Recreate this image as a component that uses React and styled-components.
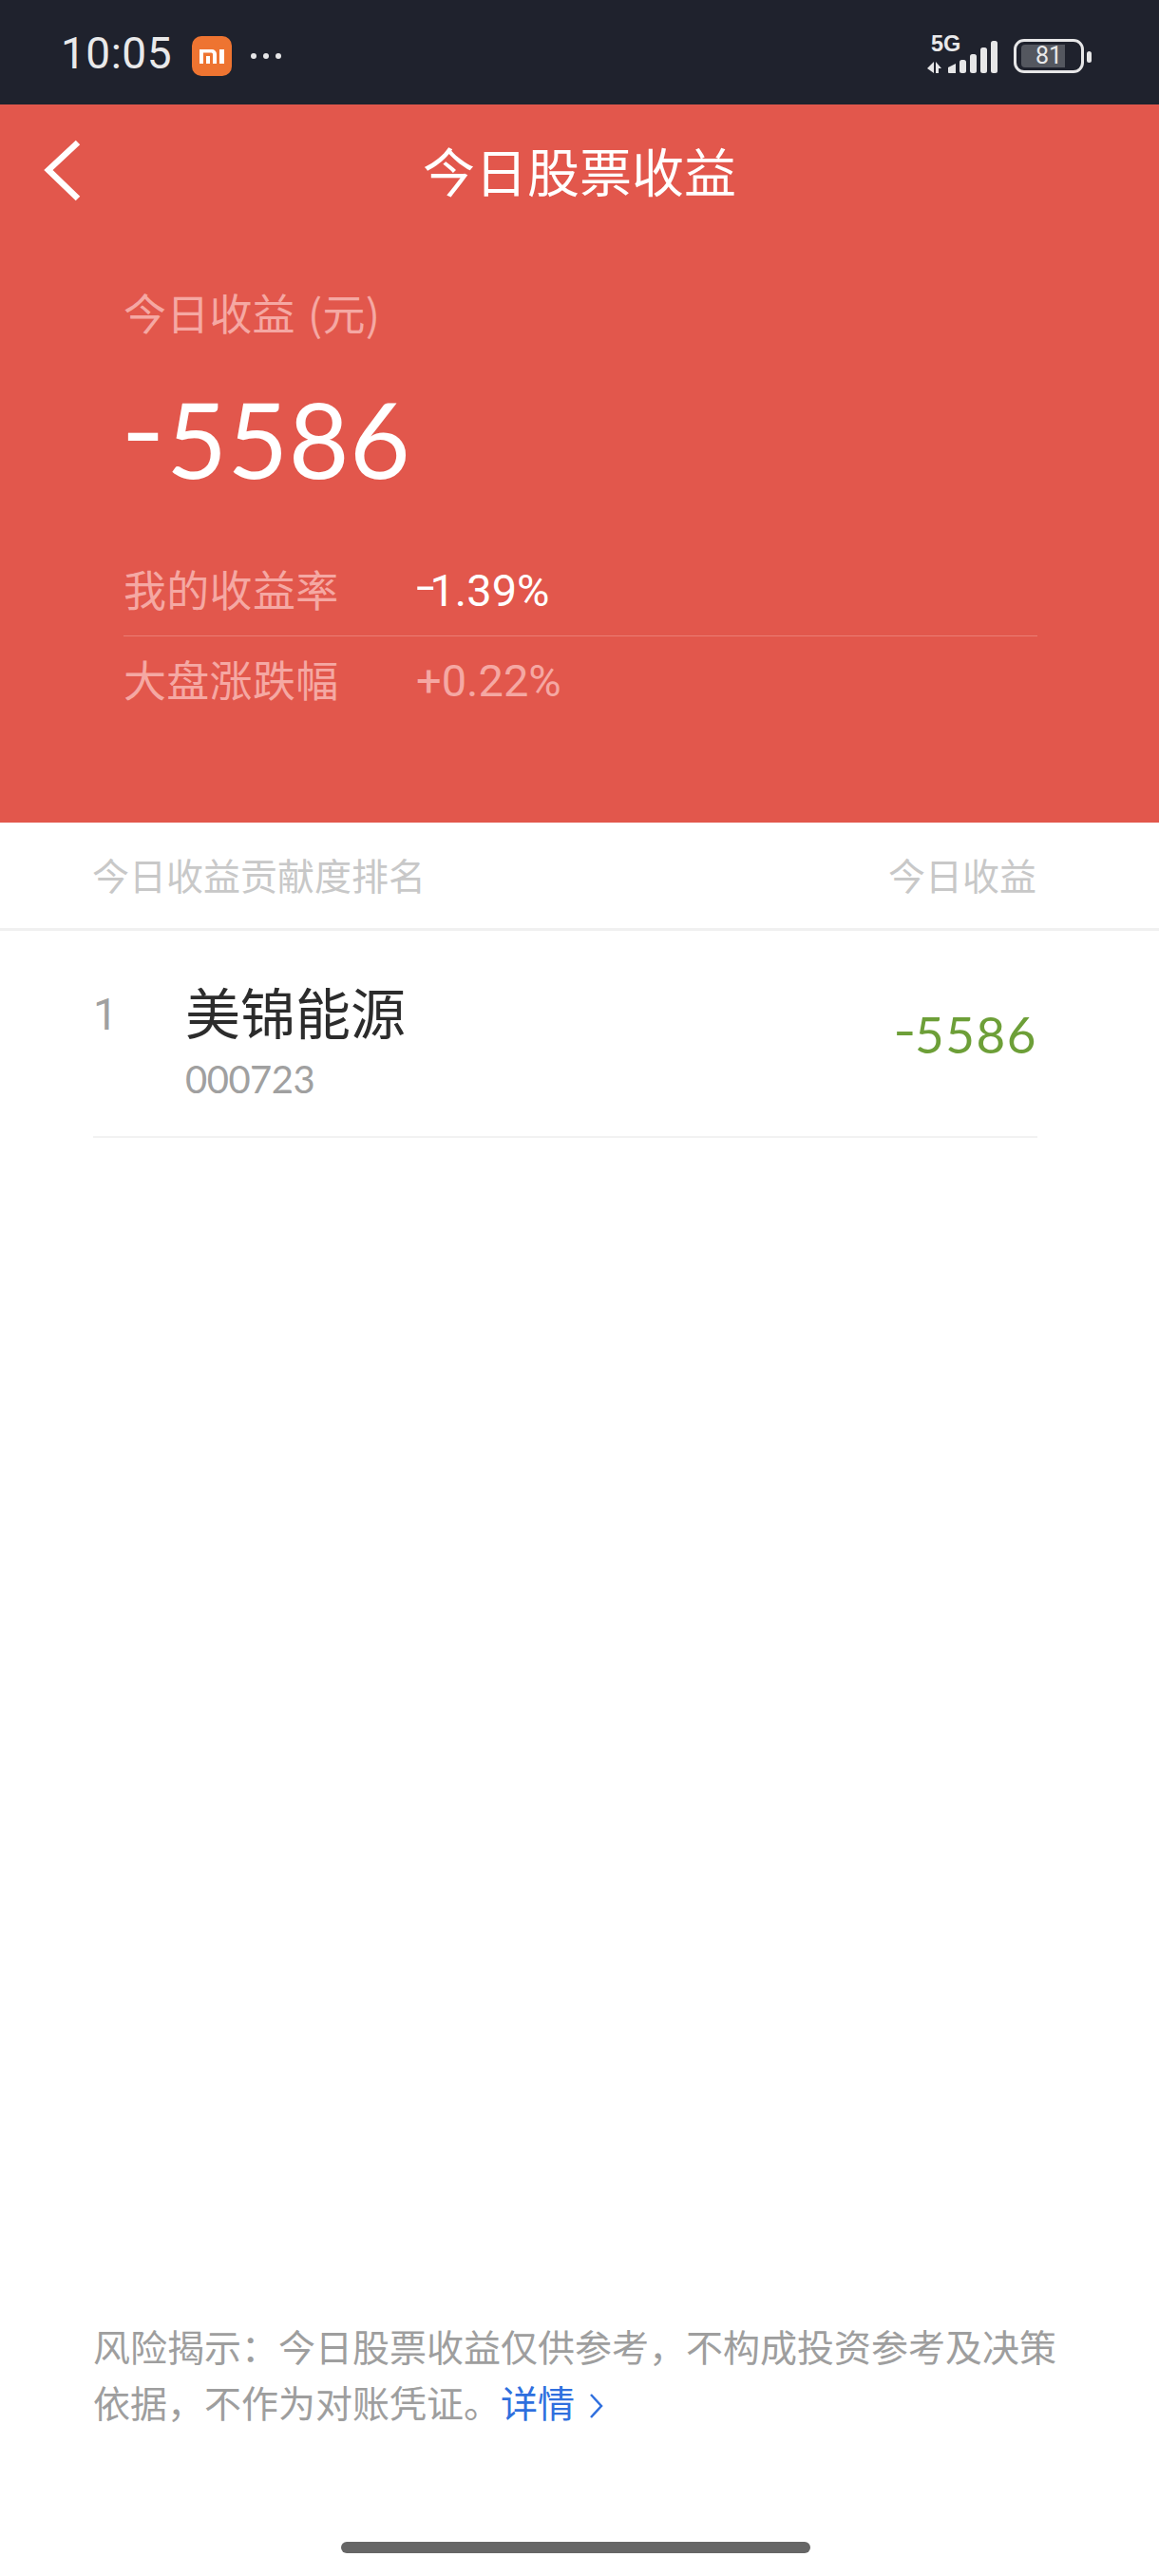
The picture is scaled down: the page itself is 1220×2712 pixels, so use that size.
import React from 'react';
import styled, { createGlobalStyle } from 'styled-components';

const Global = createGlobalStyle`
  html, body { margin: 0; padding: 0; background: #fff; }
  body { font-family: "Lato", "Noto Sans CJK SC", sans-serif; }
`;

const cjk = `"Noto Sans CJK SC", "Noto Sans", sans-serif`;
const num = `"Lato", "Noto Sans CJK SC", sans-serif`;
const slim = `"Roboto", "Noto Sans CJK SC", sans-serif`;

const Page = styled.div`
  width: 1220px;
  height: 2712px;
  display: flex;
  flex-direction: column;
  background: #fff;
  overflow: hidden;
`;

const StatusBar = styled.div`
  height: 110px;
  flex: none;
  background: #1f222d;
  display: flex;
  align-items: center;
  padding: 0 79px 0 64px;
  box-sizing: border-box;
`;
const Time = styled.span`
  font: 400 46px/60px ${slim};
  color: #e9e9ea;
  letter-spacing: 0.5px;
  margin-top: 2px;
`;
const MiBadge = styled.svg`
  display: block;
  margin-left: 21px;
  margin-top: 8px;
`;
const Dots = styled.svg`
  display: block;
  margin-left: 19px;
  margin-top: 8px;
`;
const StatusRight = styled.div`
  margin-left: auto;
  display: flex;
  align-items: center;
`;
const SignalIcon = styled.svg`
  display: block;
  margin-top: 4px;
  overflow: visible;
`;
const FiveG = styled.text`
  font: 700 23.500px "Liberation Sans", sans-serif;
  fill: #e9e9ea;
`;
const Battery = styled.div`
  position: relative;
  width: 74px;
  height: 36px;
  box-sizing: border-box;
  border: 3px solid #e6e6e7;
  border-radius: 11px;
  margin-left: 14px;
  margin-top: 7px;
  display: flex;
  align-items: center;
  padding-left: 5px;
`;
const BatteryFill = styled.div`
  height: 24px;
  background: #54575f;
  border-radius: 4px 0 0 4px;
  display: flex;
  align-items: center;
  justify-content: center;
  padding-left: 12px;
  box-sizing: border-box;
  font: 400 25px/24px ${slim};
  color: #e9e9ea;
`;
const BatteryNub = styled.div`
  position: absolute;
  left: 74px;
  top: 10px;
  width: 5px;
  height: 12px;
  border-radius: 3px;
  background: #e6e6e7;
`;

const Hero = styled.section`
  height: 756px;
  flex: none;
  box-sizing: border-box;
  background: #e2574c;
`;
const NavBar = styled.header`
  height: 140px;
  display: grid;
  grid-template-columns: 1fr auto 1fr;
  align-items: center;
`;
const BackIcon = styled.svg`
  display: block;
  margin-left: 44px;
`;
const NavTitle = styled.h1`
  margin: 0 0 5px;
  font: 400 55px/70px ${cjk};
  color: #fff;
`;
const HeroBody = styled.div`
  padding: 49px 128px 0 130px;
`;
const HeroLabel = styled.div`
  font: 400 45px/60px ${cjk};
  color: #f5a8a3;
  word-spacing: 3px;
  letter-spacing: 0.2px;
`;
const HeroAmount = styled.div`
  margin-top: 42px;
  font: 400 110px/120px ${num};
  color: #fff;
  letter-spacing: 0.5px;
`;
const Minus = styled.span`
  display: inline-block;
  transform-origin: left center;
  transform: translateY(-0.1em) scaleX(${p => p.$stretch});
  margin-left: ${p => p.$lead || 0}em;
  margin-right: ${p => p.$gap}em;
`;
const Stats = styled.div`
  margin-top: 54px;
`;
const StatRow = styled.div`
  display: flex;
  align-items: center;
  height: 94px;
  border-bottom: ${p => (p.$divided ? '1px solid #ec7d74' : 'none')};
`;
const StatLabel = styled.span`
  width: 308px;
  margin-bottom: 4px;
  font: 400 45px/60px ${cjk};
  letter-spacing: 0.3px;
  color: #f5a8a3;
`;
const StatValue = styled.span`
  font: 400 47px/60px ${slim};
  color: ${p => (p.$bright ? '#fff' : '#f5a8a3')};
`;

const TableHead = styled.div`
  height: 114px;
  flex: none;
  box-sizing: border-box;
  border-bottom: 3px solid #f0f0f0;
  display: flex;
  align-items: center;
  justify-content: space-between;
  padding: 0 129px 0 97px;
`;
const HeadCell = styled.span`
  margin-bottom: 4px;
  font: 400 39px/50px ${cjk};
  color: #c8c8c8;
`;
const StockRow = styled.div`
  height: 218px;
  flex: none;
  box-sizing: border-box;
  margin: 0 128px 0 98px;
  padding-top: 49px;
  border-bottom: 2px solid #f2f2f2;
  display: grid;
  grid-template-columns: 97px 1fr auto;
`;
const Rank = styled.span`
  margin-top: 4px;
  font: 400 46px/70px ${slim};
  color: #a0a0a0;
`;
const StockInfo = styled.div`
  display: flex;
  flex-direction: column;
`;
const StockName = styled.span`
  font: 400 58px/70px ${cjk};
  color: #2c2c2c;
`;
const StockCode = styled.span`
  margin-top: 7px;
  font: 400 40px/60px ${num};
  color: #a0a0a0;
  letter-spacing: -0.5px;
`;
const StockValue = styled.span`
  margin-top: 25px;
  font: 400 53px/70px ${num};
  color: #6d9f38;
  letter-spacing: 1.5px;
`;

const Footer = styled.footer`
  margin-top: auto;
  flex: none;
  display: flex;
  flex-direction: column;
`;
const Disclaimer = styled.p`
  margin: 0;
  padding: 0 100px 0 98px;
  font: 400 39px/59px ${cjk};
  color: #9e9e9e;
`;
const DetailLink = styled.a`
  color: #2f6fde;
`;
const LinkChevron = styled.svg`
  display: inline-block;
  margin-left: 15px;
  vertical-align: -2px;
`;
const HomeBar = styled.div`
  width: 494px;
  height: 12px;
  border-radius: 6px;
  background: #666;
  margin: 118px 0 24px 359px;
`;

export default function App() {
  return (
    <Page lang="zh-CN">
      <Global />
      <StatusBar>
        <Time>10:05</Time>
        <MiBadge width="42" height="42" viewBox="0 0 42 42">
          <rect width="42" height="42" rx="10" fill="#ee7431" />
          <path d="M8 14h13a5 5 0 0 1 5 5v10h-4V19a1.500 1.500 0 0 0-1.500-1.500H12V29H8zM15 21h4v8h-4zM29 14h5v15h-5z" fill="#fff" />
        </MiBadge>
        <Dots width="34" height="8" viewBox="0 0 34 8">
          <circle cx="4" cy="4" r="3" fill="#e6e6e7" />
          <circle cx="17" cy="4" r="3" fill="#e6e6e7" />
          <circle cx="30" cy="4" r="3" fill="#e6e6e7" />
        </Dots>
        <StatusRight>
          <SignalIcon width="78" height="44" viewBox="0 0 78 44">
            <FiveG x="5" y="19">5G</FiveG>
            <g fill="#e6e6e7">
              <path d="M8 30v12l-7-5z" />
              <path d="M10 30l6 7h-3v5h-3z" />
              <path d="M23 36l8-4v10h-7a1 1 0 0 1-1-1z" />
              <rect x="35" y="28" width="7" height="14" rx="2.500" />
              <rect x="46" y="22" width="7" height="20" rx="2.500" />
              <rect x="57" y="15" width="7" height="27" rx="2.500" />
              <rect x="68" y="8" width="7" height="34" rx="2.500" />
            </g>
          </SignalIcon>
          <Battery>
            <BatteryFill style={{ width: 46 }}>81</BatteryFill>
            <BatteryNub />
          </Battery>
        </StatusRight>
      </StatusBar>

      <Hero>
        <NavBar>
          <BackIcon width="44" height="68" viewBox="0 0 44 68">
            <path d="M38 4 7 33l31 30" fill="none" stroke="#fff" strokeWidth="6.500" />
          </BackIcon>
          <NavTitle>今日股票收益</NavTitle>
          <span />
        </NavBar>
        <HeroBody>
          <HeroLabel>今日收益 (元)</HeroLabel>
          <HeroAmount><Minus $stretch={1.15} $gap={0.06} $lead={-0.025}>-</Minus>5586</HeroAmount>
          <Stats>
            <StatRow $divided>
              <StatLabel>我的收益率</StatLabel>
              <StatValue $bright><Minus $stretch={1.5} $gap={0.03}>-</Minus>1.39%</StatValue>
            </StatRow>
            <StatRow>
              <StatLabel>大盘涨跌幅</StatLabel>
              <StatValue>+0.22%</StatValue>
            </StatRow>
          </Stats>
        </HeroBody>
      </Hero>

      <TableHead>
        <HeadCell>今日收益贡献度排名</HeadCell>
        <HeadCell>今日收益</HeadCell>
      </TableHead>
      <StockRow>
        <Rank>1</Rank>
        <StockInfo>
          <StockName>美锦能源</StockName>
          <StockCode>000723</StockCode>
        </StockInfo>
        <StockValue><Minus $stretch={1.25} $gap={0.03}>-</Minus>5586</StockValue>
      </StockRow>

      <Footer>
        <Disclaimer>
          风险揭示：今日股票收益仅供参考，不构成投资参考及决策依据，不作为对账凭证。
          <DetailLink>
            详情
            <LinkChevron width="16" height="28" viewBox="0 0 16 28">
              <path d="M2 2l11 12L2 26" fill="none" stroke="#2f6fde" strokeWidth="2.500" />
            </LinkChevron>
          </DetailLink>
        </Disclaimer>
        <HomeBar />
      </Footer>
    </Page>
  );
}
